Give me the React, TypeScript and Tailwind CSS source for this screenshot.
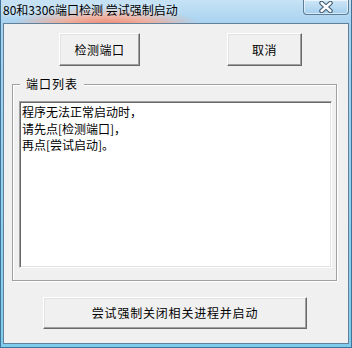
import React from "react";

const FONT = { fontFamily: '"Noto Sans CJK SC", "Noto Sans", sans-serif' };

function ClassicButton({ label, className }: { label: string; className: string }) {
  return (
    <button
      className={`flex items-center justify-center border border-t-[#ffffff] border-l-[#ffffff] border-r-[#696969] border-b-[#696969] bg-[#f0f0f0] text-[12px] text-black shadow-[inset_-1px_-1px_0_#a0a0a0,inset_1px_1px_0_#e3e3e3] ${className}`}
    >
      {label}
    </button>
  );
}

function CloseGlyph() {
  return (
    <svg width="16" height="12" viewBox="0 0 16 12">
      <path d="M3.5 2 L12.5 10 M12.5 2 L3.5 10" stroke="#3e5a72" strokeWidth="4.5" strokeLinecap="round" />
      <path d="M3.5 2 L12.5 10 M12.5 2 L3.5 10" stroke="#ffffff" strokeWidth="2.4" strokeLinecap="round" />
    </svg>
  );
}

export default function App() {
  return (
    <div
      style={FONT}
      className="flex h-[348px] w-[352px] flex-col overflow-hidden border-x border-b border-[#3f7399] bg-[linear-gradient(to_bottom,#a9d4f0,#7fcbec)]"
    >
      {/* title bar */}
      <div className="flex h-[23px] shrink-0 items-start bg-[radial-gradient(ellipse_95px_18px_at_105px_25px,#ea8876_0%,#f0ad9a_45%,rgba(240,173,154,0)_100%),linear-gradient(to_bottom,#c6e2f5,#a8d3f0)]">
        <span className="pl-[2px] pt-[2px] text-[12px] leading-[16px] text-black [text-shadow:0_0_6px_rgba(255,255,255,0.8)]">
          80和3306端口检测 尝试强制启动
        </span>
        <div className="ml-auto mr-[2px] flex h-[15px] w-[46px] items-center justify-center rounded-b-[4px] border border-t-0 border-[#5d7c96] bg-[linear-gradient(to_bottom,#cfe6f6,#a3cfee)] shadow-[inset_0_0_0_1px_rgba(255,255,255,0.55)]">
          <CloseGlyph />
        </div>
      </div>

      {/* client area */}
      <div className="mx-[2px] mb-[3px] flex flex-1 flex-col border border-[#61819b] bg-[#f0f0f0] pt-[9px]">
        <div className="flex pl-[55px]">
          <ClassicButton label="检测端口" className="h-[33px] w-[81px] tracking-[0.5px]" />
          <ClassicButton label="取消" className="ml-[87px] h-[33px] w-[75px] tracking-[0.5px]" />
        </div>

        <div className="ml-[8px] mt-[18px] flex w-[325px] flex-col border border-[#a0a0a0] pb-[12px] shadow-[inset_1px_1px_0_#ffffff,1px_1px_0_#ffffff]">
          <span className="-mt-[9px] ml-[7px] w-fit bg-[#f0f0f0] px-[6px] text-[12px] leading-[16px] tracking-[1px] text-black">
            端口列表
          </span>
          <div className="ml-[6px] mt-[9px] h-[167px] w-[313px] whitespace-pre-line border border-t-[#a0a0a0] border-l-[#a0a0a0] border-r-[#ffffff] border-b-[#ffffff] bg-white pl-[2px] pt-[2px] text-[12px] leading-[16.5px] text-black shadow-[inset_1px_1px_0_#696969,inset_-1px_-1px_0_#e3e3e3]">
            {"程序无法正常启动时，\n请先点[检测端口]，\n再点[尝试启动]。"}
          </div>
        </div>

        <ClassicButton
          label="尝试强制关闭相关进程并启动"
          className="ml-[39px] mt-[16px] h-[32px] w-[264px] tracking-[0.8px]"
        />
      </div>
    </div>
  );
}
